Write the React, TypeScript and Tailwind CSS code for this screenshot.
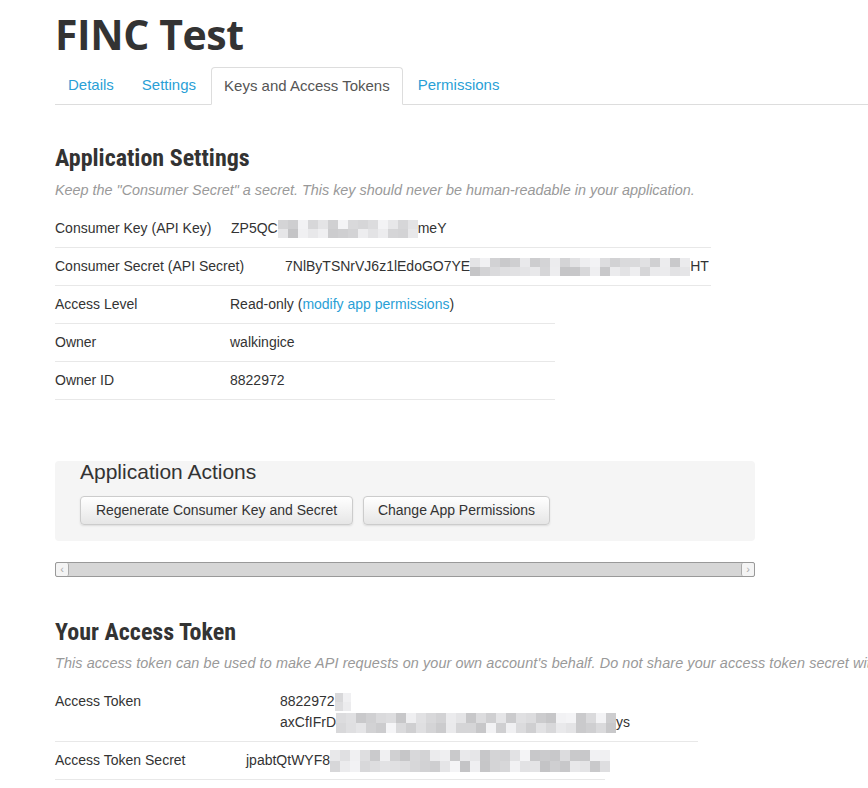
import React from "react";

const SANS = "font-['Liberation_Sans',Arial,sans-serif]";
const NARROW = "font-['Roboto_Condensed','Liberation_Sans_Narrow','Liberation_Sans',sans-serif]";

function shades(seed: number, n: number) {
  const out: string[] = [];
  let s = seed;
  for (let i = 0; i < n; i++) {
    s = (s * 9301 + 49297) % 233280;
    const v = 196 + Math.floor((s / 233280) * 50);
    out.push(`rgb(${v},${v},${v + 2})`);
  }
  return out;
}

// pixelated blur over the secret parts
function Mosaic({ cols, rows, cell, h, seed }: { cols: number; rows: number; cell: number; h: number; seed: number }) {
  const colors = shades(seed, cols * rows);
  return (
    <span className="inline-grid align-middle" style={{ gridTemplateColumns: `repeat(${cols}, ${cell}px)`, gridAutoRows: `${h}px` }}>
      {colors.map((c, i) => (
        <span key={i} style={{ background: c }} />
      ))}
    </span>
  );
}

function Row({ label, children, width, valueX }: { label: string; children: React.ReactNode; width: number; valueX: number }) {
  return (
    <div className={`flex h-[38px] items-center border-b border-[#e8e8e8] text-[14px] text-[#333] ${SANS}`} style={{ width }}>
      <div className="shrink-0" style={{ width: valueX }}>{label}</div>
      <div className="flex items-center whitespace-nowrap">{children}</div>
    </div>
  );
}

export default function App() {
  return (
    <div className={`w-[868px] h-[788px] overflow-hidden bg-white ${SANS} text-[#333]`}>
      <div className="pl-[55px]">
        <h1 className="pt-[10px] text-[41px] font-bold leading-[48px] tracking-[-0.4px] text-[#333] font-['Open_Sans',sans-serif]">FINC Test</h1>

        <div className="mt-[9px] flex h-[38px] items-end border-b border-[#ddd] text-[15px]">
          <a className="flex h-[37px] items-center px-[13px] text-[#2a9fd6]">Details</a>
          <a className="ml-[2px] flex h-[37px] items-center px-[13px] text-[#2a9fd6]">Settings</a>
          <a className="ml-[2px] -mb-px flex h-[38px] items-center rounded-t-[4px] border border-b-white border-[#ddd] bg-white pl-[12px] pr-[12px] text-[#555]">Keys and Access Tokens</a>
          <a className="ml-[2px] flex h-[37px] items-center px-[13px] text-[#2a9fd6]">Permissions</a>
        </div>

        <h2 className={`mt-[38px] text-[24px] font-bold leading-[30px] text-[#333] ${NARROW}`}>Application Settings</h2>
        <p className="mt-[7px] text-[14.4px] italic leading-[20px] text-[#999]">Keep the "Consumer Secret" a secret. This key should never be human-readable in your application.</p>

        <div className="mt-[10px]">
          <Row label="Consumer Key (API Key)" width={656} valueX={176}>
            ZP5QC
            <Mosaic cols={14} rows={2} cell={10} h={9} seed={3} />
            meY
          </Row>
          <Row label="Consumer Secret (API Secret)" width={656} valueX={230}>
            7NlByTSNrVJ6z1lEdoGO7YE
            <Mosaic cols={22} rows={2} cell={10} h={9} seed={11} />
            HT
          </Row>
          <Row label="Access Level" width={500} valueX={175}>
            Read-only (<a className="text-[#2a9fd6]">modify app permissions</a>)
          </Row>
          <Row label="Owner" width={500} valueX={175}>walkingice</Row>
          <Row label="Owner ID" width={500} valueX={175}>8822972</Row>
        </div>

        <div className="mt-[61px] h-[80px] w-[700px] rounded-[4px] bg-[#f5f5f5] px-[25px]">
          <h3 className="text-[21px] leading-[22px] text-[#333]">Application Actions</h3>
          <div className="mt-[13px] flex gap-[10px] text-[14px]">
            <button className="h-[29px] w-[273px] rounded-[4px] border border-[#ccc] bg-gradient-to-b from-white to-[#e6e6e6] text-[#333] shadow-[0_1px_2px_rgba(0,0,0,0.1)]">Regenerate Consumer Key and Secret</button>
            <button className="h-[29px] w-[187px] rounded-[4px] border border-[#ccc] bg-gradient-to-b from-white to-[#e6e6e6] text-[#333] shadow-[0_1px_2px_rgba(0,0,0,0.1)]">Change App Permissions</button>
          </div>
        </div>

        <div className="mt-[21px] flex h-[15px] w-[700px] rounded-[2px] border border-[#999] bg-[#d6d6d6]">
          <div className="flex w-[13px] items-center justify-center rounded-[2px] border-r border-[#aaa] bg-[#f4f4f4] text-[11px] leading-none text-[#aaa]">‹</div>
          <div className="flex-1" />
          <div className="flex w-[13px] items-center justify-center rounded-[2px] border-l border-[#aaa] bg-[#f4f4f4] text-[11px] leading-none text-[#aaa]">›</div>
        </div>

        <h2 className={`mt-[40px] text-[24px] font-bold leading-[30px] text-[#333] ${NARROW}`}>Your Access Token</h2>
        <p className="mt-[6px] whitespace-nowrap text-[14.4px] italic leading-[20px] tracking-[0.1px] text-[#999]">This access token can be used to make API requests on your own account's behalf. Do not share your access token secret with anyone.</p>

        <div className="mt-[9px] text-[14px] text-[#333]">
          <div className="flex h-[60px] w-[643px] border-b border-[#e8e8e8] pt-[9px]">
            <div className="w-[225px] shrink-0 leading-[21px]">Access Token</div>
            <div className="leading-[21px]">
              <div className="flex items-center">8822972<Mosaic cols={2} rows={2} cell={8} h={9} seed={5} /></div>
              <div className="flex items-center">axCfIFrD<Mosaic cols={28} rows={2} cell={10} h={10} seed={7} />ys</div>
            </div>
          </div>
          <div className="flex h-[38px] w-[550px] items-center border-b border-[#e8e8e8]">
            <div className="w-[191px] shrink-0">Access Token Secret</div>
            <div className="flex items-center">jpabtQtWYF8<Mosaic cols={28} rows={2} cell={10} h={11} seed={13} /></div>
          </div>
        </div>
      </div>
    </div>
  );
}
